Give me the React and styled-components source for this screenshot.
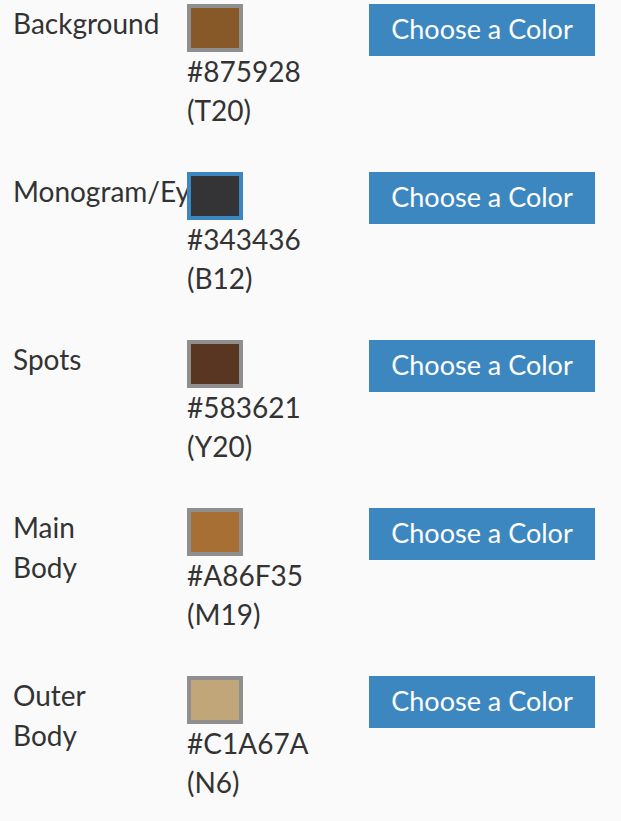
import React from 'react';
import styled, { createGlobalStyle } from 'styled-components';

const GlobalStyle = createGlobalStyle`
  html, body {
    margin: 0;
    padding: 0;
    background: #fafafa;
  }
  body {
    font-family: Lato, "Open Sans", sans-serif;
    color: #333333;
  }
`;

const colors = [
  { label: 'Background', hex: '#875928', code: 'T20' },
  { label: 'Monogram/\u2060Eyes', hex: '#343436', code: 'B12', active: true },
  { label: 'Spots', hex: '#583621', code: 'Y20' },
  { label: 'Main Body', hex: '#A86F35', code: 'M19' },
  { label: 'Outer Body', hex: '#C1A67A', code: 'N6' },
];

const App = () => {
  return (
    <>
      <GlobalStyle />
      <ColorList>
        {colors.map((item) => (
          <ColorRow key={item.code}>
            <ColorLabel>{item.label}</ColorLabel>
            <SwatchCell>
              <Swatch $color={item.hex} $active={item.active} />
              <SwatchText>
                {item.hex}
                <br />({item.code})
              </SwatchText>
            </SwatchCell>
            <ChooseButton type="button">Choose a Color</ChooseButton>
          </ColorRow>
        ))}
      </ColorList>
    </>
  );
};

export default App;

const ColorList = styled.div`
  display: flex;
  flex-direction: column;
  gap: 43px;
  padding: 4px 0 0 13px;
`;
const ColorRow = styled.div`
  display: grid;
  grid-template-columns: 174px 182px 226px;
  align-items: start;
`;
const ColorLabel = styled.div`
  width: 120px;
  font-size: 28px;
  line-height: 40px;
  margin-top: -1px;
`;
const SwatchCell = styled.div`
  display: flex;
  flex-direction: column;
`;
const Swatch = styled.div`
  width: 48px;
  height: 40px;
  border: 4px solid ${(p) => (p.$active ? '#3d87c0' : '#8f8f8f')};
  background: ${(p) => p.$color};
`;
const SwatchText = styled.div`
  font-size: 28px;
  line-height: 38.5px;
`;
const ChooseButton = styled.button`
  width: 226px;
  height: 52px;
  border: none;
  background: #3d87c0;
  color: #ffffff;
  font-family: Lato, "Open Sans", sans-serif;
  font-size: 27px;
  padding: 0 0 3px;
  cursor: pointer;
`;
